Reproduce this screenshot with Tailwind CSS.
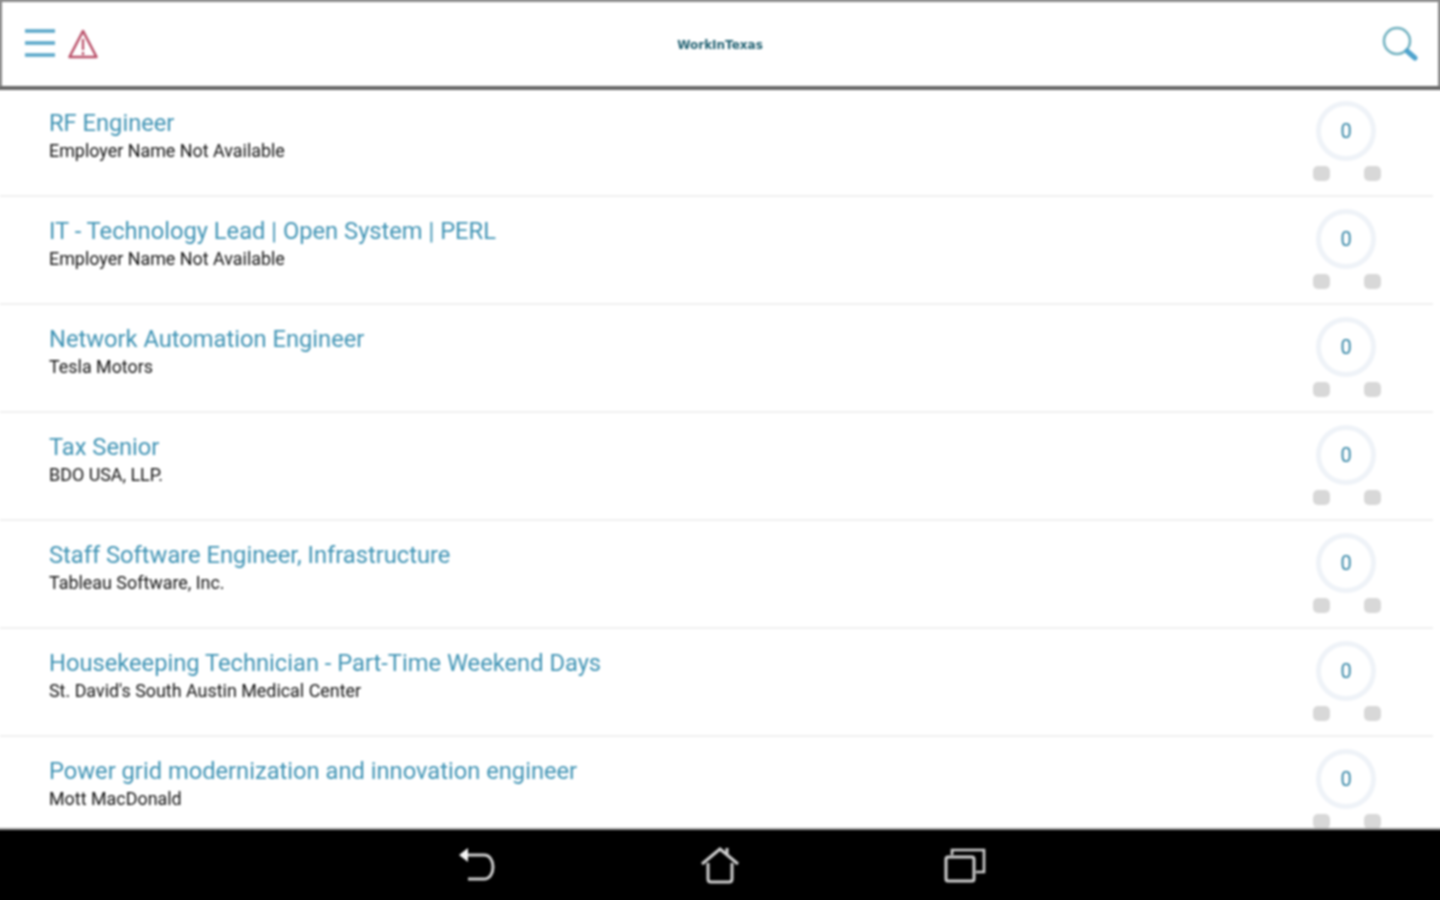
<!DOCTYPE html>
<html>
<head>
<meta charset="utf-8">
<script src="https://cdn.jsdelivr.net/npm/@tailwindcss/browser@4"></script>
</head>
<body class="m-0 bg-white">
<div class="w-[1440px] h-[900px] overflow-hidden">
<div class="w-[1460px] h-[920px] -ml-[10px] -mt-[10px] flex flex-col bg-white font-['Roboto',sans-serif] [filter:blur(0.9px)]">
  <header class="h-[100px] shrink-0 flex items-center justify-between pl-[23px] pr-[20px] border-x-[12px] border-t-[12px] border-[#8a8a8a] border-b-[4px] border-b-[#666666] relative">
    <div class="flex items-center gap-[13px]">
      <svg width="30" height="34" viewBox="0 0 30 34"><path d="M0 4h30M0 16h30M0 28h30" stroke="#58a6c9" stroke-width="3.5" fill="none"/></svg>
      <svg width="30" height="32" viewBox="0 0 30 32"><path d="M15 3 L28.5 29 H1.5 Z" stroke="#b94f68" stroke-width="2.5" fill="none" stroke-linejoin="round"/><path d="M15 11v11M15 24v3" stroke="#b94f68" stroke-width="2.2"/></svg>
    </div>
    <div class="absolute left-0 right-0 top-[35px] text-center text-[12px] leading-[16px] font-bold text-[#1f5f70] font-['DejaVu_Sans',sans-serif]">WorkInTexas</div>
    <svg width="36" height="38" viewBox="0 0 36 38"><circle cx="15" cy="16" r="13" stroke="#6fb0bf" stroke-width="2.5" fill="none"/><path d="M25 26 L33 33" stroke="#4ea3cd" stroke-width="5" stroke-linecap="round"/></svg>
  </header>
  <main class="flex-1 overflow-hidden ml-[10px] w-[1440px]">
    <div class="h-[107px] mr-[7px] flex justify-between pl-[49px] pr-[52px] border-b-2 border-[#f0f0f0]">
      <div class="pt-[20px]">
        <div class="text-[23.7px] leading-[27px] text-[#3f93b4]">RF Engineer</div>
        <div class="text-[17.9px] leading-[27px] text-[#111111]">Employer Name Not Available</div>
      </div>
      <div class="w-[68px] flex flex-col items-center pt-[11px]">
        <div class="w-[60px] h-[60px] mr-[2px] rounded-full border-[5px] border-[#eff3f8] flex items-center justify-center text-[20px] text-[#2f82a3]">0</div>
        <div class="w-full flex justify-between mt-[5px]"><span class="w-[17px] h-[15px] rounded-[5px] bg-[#d8d8d8]"></span><span class="w-[17px] h-[15px] rounded-[5px] bg-[#d8d8d8]"></span></div>
      </div>
    </div>
    <div class="h-[108px] mr-[7px] flex justify-between pl-[49px] pr-[52px] border-b-2 border-[#f0f0f0]">
      <div class="pt-[21px]">
        <div class="text-[23.7px] leading-[27px] text-[#3f93b4]">IT - Technology Lead | Open System | PERL</div>
        <div class="text-[17.9px] leading-[27px] text-[#111111]">Employer Name Not Available</div>
      </div>
      <div class="w-[68px] flex flex-col items-center pt-[12px]">
        <div class="w-[60px] h-[60px] mr-[2px] rounded-full border-[5px] border-[#eff3f8] flex items-center justify-center text-[20px] text-[#2f82a3]">0</div>
        <div class="w-full flex justify-between mt-[5px]"><span class="w-[17px] h-[15px] rounded-[5px] bg-[#d8d8d8]"></span><span class="w-[17px] h-[15px] rounded-[5px] bg-[#d8d8d8]"></span></div>
      </div>
    </div>
    <div class="h-[108px] mr-[7px] flex justify-between pl-[49px] pr-[52px] border-b-2 border-[#f0f0f0]">
      <div class="pt-[21px]">
        <div class="text-[23.7px] leading-[27px] text-[#3f93b4]">Network Automation Engineer</div>
        <div class="text-[17.9px] leading-[27px] text-[#111111]">Tesla Motors</div>
      </div>
      <div class="w-[68px] flex flex-col items-center pt-[12px]">
        <div class="w-[60px] h-[60px] mr-[2px] rounded-full border-[5px] border-[#eff3f8] flex items-center justify-center text-[20px] text-[#2f82a3]">0</div>
        <div class="w-full flex justify-between mt-[5px]"><span class="w-[17px] h-[15px] rounded-[5px] bg-[#d8d8d8]"></span><span class="w-[17px] h-[15px] rounded-[5px] bg-[#d8d8d8]"></span></div>
      </div>
    </div>
    <div class="h-[108px] mr-[7px] flex justify-between pl-[49px] pr-[52px] border-b-2 border-[#f0f0f0]">
      <div class="pt-[21px]">
        <div class="text-[23.7px] leading-[27px] text-[#3f93b4]">Tax Senior</div>
        <div class="text-[17.9px] leading-[27px] text-[#111111]">BDO USA, LLP.</div>
      </div>
      <div class="w-[68px] flex flex-col items-center pt-[12px]">
        <div class="w-[60px] h-[60px] mr-[2px] rounded-full border-[5px] border-[#eff3f8] flex items-center justify-center text-[20px] text-[#2f82a3]">0</div>
        <div class="w-full flex justify-between mt-[5px]"><span class="w-[17px] h-[15px] rounded-[5px] bg-[#d8d8d8]"></span><span class="w-[17px] h-[15px] rounded-[5px] bg-[#d8d8d8]"></span></div>
      </div>
    </div>
    <div class="h-[108px] mr-[7px] flex justify-between pl-[49px] pr-[52px] border-b-2 border-[#f0f0f0]">
      <div class="pt-[21px]">
        <div class="text-[23.7px] leading-[27px] text-[#3f93b4]">Staff Software Engineer, Infrastructure</div>
        <div class="text-[17.9px] leading-[27px] text-[#111111]">Tableau Software, Inc.</div>
      </div>
      <div class="w-[68px] flex flex-col items-center pt-[12px]">
        <div class="w-[60px] h-[60px] mr-[2px] rounded-full border-[5px] border-[#eff3f8] flex items-center justify-center text-[20px] text-[#2f82a3]">0</div>
        <div class="w-full flex justify-between mt-[5px]"><span class="w-[17px] h-[15px] rounded-[5px] bg-[#d8d8d8]"></span><span class="w-[17px] h-[15px] rounded-[5px] bg-[#d8d8d8]"></span></div>
      </div>
    </div>
    <div class="h-[108px] mr-[7px] flex justify-between pl-[49px] pr-[52px] border-b-2 border-[#f0f0f0]">
      <div class="pt-[21px]">
        <div class="text-[23.7px] leading-[27px] text-[#3f93b4]">Housekeeping Technician - Part-Time Weekend Days</div>
        <div class="text-[17.9px] leading-[27px] text-[#111111]">St. David's South Austin Medical Center</div>
      </div>
      <div class="w-[68px] flex flex-col items-center pt-[12px]">
        <div class="w-[60px] h-[60px] mr-[2px] rounded-full border-[5px] border-[#eff3f8] flex items-center justify-center text-[20px] text-[#2f82a3]">0</div>
        <div class="w-full flex justify-between mt-[5px]"><span class="w-[17px] h-[15px] rounded-[5px] bg-[#d8d8d8]"></span><span class="w-[17px] h-[15px] rounded-[5px] bg-[#d8d8d8]"></span></div>
      </div>
    </div>
    <div class="h-[108px] mr-[7px] flex justify-between pl-[49px] pr-[52px]">
      <div class="pt-[21px]">
        <div class="text-[23.7px] leading-[27px] text-[#3f93b4]">Power grid modernization and innovation engineer</div>
        <div class="text-[17.9px] leading-[27px] text-[#111111]">Mott MacDonald</div>
      </div>
      <div class="w-[68px] flex flex-col items-center pt-[12px]">
        <div class="w-[60px] h-[60px] mr-[2px] rounded-full border-[5px] border-[#eff3f8] flex items-center justify-center text-[20px] text-[#2f82a3]">0</div>
        <div class="w-full flex justify-between mt-[5px]"><span class="w-[17px] h-[15px] rounded-[5px] bg-[#d8d8d8]"></span><span class="w-[17px] h-[15px] rounded-[5px] bg-[#d8d8d8]"></span></div>
      </div>
    </div>
  </main>
  <nav class="h-[82px] shrink-0 bg-black border-t-2 border-[#999999] pb-[10px] flex items-center justify-center gap-[202px]">
    <svg width="40" height="38" viewBox="0 0 40 38" class="ml-[4px]"><path d="M8 9 H26 C38 9 38 33 26 33 H10" stroke="#d0d0d0" stroke-width="3" fill="none"/><path d="M1 9 L10 2 V16 Z" fill="#f5f5f5"/></svg>
    <svg width="40" height="38" viewBox="0 0 40 38"><path d="M2 18 L20 3 L38 18 M27 9 V2 M8 17 V33 Q8 36 11 36 H29 Q32 36 32 33 V17" stroke="#d0d0d0" stroke-width="3" fill="none"/></svg>
    <svg width="44" height="38" viewBox="0 0 44 38"><rect x="4" y="11" width="28" height="24" rx="2" stroke="#d0d0d0" stroke-width="3" fill="none"/><path d="M10 9 V4 H42 V26 H34" stroke="#d0d0d0" stroke-width="2.6" fill="none"/></svg>
  </nav>
</div>
</div>
</body>
</html>
